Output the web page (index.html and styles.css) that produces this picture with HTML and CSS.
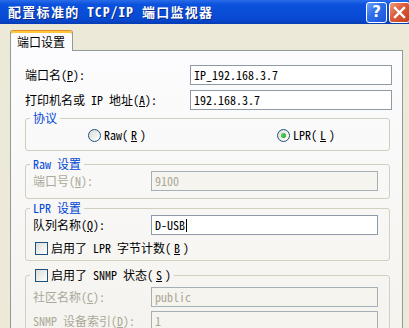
FILE: index.html
```html
<!DOCTYPE html>
<html lang="zh-CN">
<head>
    <meta charset="UTF-8">
    <meta name="viewport" content="width=device-width, initial-scale=1.0">
    <title>配置标准的 TCP/IP 端口监视器</title>
    <link rel="stylesheet" href="styles.css">
</head>
<body>
    <div class="window">
        <div class="titlebar">
            <span class="title">配置标准的 TCP/IP 端口监视器</span>
            <div class="caption-buttons">
                <span class="cap-btn help">?</span>
                <span class="cap-btn close">
                    <svg width="19" height="19" viewBox="0 0 19 19">
                        <path d="M5 5 L14 14 M14 5 L5 14" stroke="#fff" stroke-width="2.4" stroke-linecap="square"/>
                    </svg>
                </span>
            </div>
        </div>

        <div class="client">
            <div class="tab">端口设置</div>
            <div class="tab-page">
                <div class="field-row">
                    <span class="label">端口名(<u>P</u>):</span>
                    <div class="edit">IP_192.168.3.7</div>
                </div>
                <div class="field-row">
                    <span class="label">打印机名或 IP 地址(<u>A</u>):</span>
                    <div class="edit">192.168.3.7</div>
                </div>

                <fieldset class="group protocol">
                    <legend>协议</legend>
                    <div class="radios">
                        <span class="option"><span class="radio"></span>Raw(<u>R</u>)</span>
                        <span class="option"><span class="radio checked"></span>LPR(<u>L</u>)</span>
                    </div>
                </fieldset>

                <fieldset class="group raw-group">
                    <legend>Raw 设置</legend>
                    <div class="group-row disabled">
                        <span class="label">端口号(<u>N</u>):</span>
                        <div class="edit">9100</div>
                    </div>
                </fieldset>

                <fieldset class="group lpr-group">
                    <legend>LPR 设置</legend>
                    <div class="group-row">
                        <span class="label">队列名称(<u>Q</u>):</span>
                        <div class="edit focused">D-USB<span class="caret"></span></div>
                    </div>
                    <div class="check-row">
                        <span class="checkbox"></span>启用了 LPR 字节计数(<u>B</u>)
                    </div>
                </fieldset>

                <fieldset class="group snmp-group">
                    <legend><span class="checkbox"></span>启用了 SNMP 状态(<u>S</u>)</legend>
                    <div class="group-row disabled">
                        <span class="label">社区名称(<u>C</u>):</span>
                        <div class="edit">public</div>
                    </div>
                    <div class="group-row disabled">
                        <span class="label">SNMP 设备索引(<u>D</u>):</span>
                        <div class="edit">1</div>
                    </div>
                </fieldset>
            </div>
        </div>
    </div>
</body>
</html>
```

FILE: styles.css
```css
* {
    box-sizing: border-box;
    margin: 0;
    padding: 0;
}

body {
    width: 409px;
    height: 328px;
    overflow: hidden;
    background: #ece9d8;
    font-family: "Noto Sans CJK SC", sans-serif;
    font-size: 12px;
    font-feature-settings: "hwid";
    color: #000;
}

u {
    text-decoration: underline;
    text-underline-offset: 1px;
}

/* title bar */
.titlebar {
    height: 24px;
    display: flex;
    align-items: center;
    padding-left: 8px;
    background: linear-gradient(#2a6cea, #0b52dc 18%, #0849d2 80%, #063cb4);
}

.title {
    flex: 1;
    color: #fff;
    font-size: 13px;
    font-weight: bold;
    letter-spacing: 1.3px;
    line-height: 16px;
    text-shadow: 1px 1px #0a2d8c;
}

.caption-buttons {
    display: flex;
    gap: 2px;
    margin-right: -1px;
}

.cap-btn {
    width: 21px;
    height: 21px;
    border: 1px solid #fff;
    border-radius: 3px;
    display: flex;
    align-items: center;
    justify-content: center;
}

.help {
    background: linear-gradient(135deg, #6fa2f8, #2c6cea 45%, #1b55d8);
    color: #fff;
    font-family: "DejaVu Sans", sans-serif;
    font-weight: bold;
    font-size: 15px;
    line-height: 19px;
}

.close {
    background: linear-gradient(135deg, #ee9a80, #dc5a38 45%, #c4401e);
}

/* tab control */
.client {
    padding: 6px 0 0 10px;
}

.tab {
    position: relative;
    z-index: 1;
    width: 63px;
    height: 21px;
    margin-bottom: -1px;
    padding-left: 6px;
    line-height: 21px;
    background: #fcfcfe;
    border: 1px solid #919b9c;
    border-top: 1px solid #e68b2c;
    border-bottom: none;
    border-radius: 3px 3px 0 0;
    box-shadow: inset 0 2px #ffc83c;
}

.tab-page {
    width: 393px;
    height: 290px;
    padding: 14px 0 0 14px;
    background: linear-gradient(#fcfcfe, #f4f3ee);
    border: 1px solid #919b9c;
}

.field-row {
    display: flex;
    align-items: center;
    height: 20px;
    line-height: 16px;
}

.field-row + .field-row {
    margin-top: 5px;
}

.field-row .label {
    width: 165px;
}

.edit {
    height: 20px;
    padding-left: 3px;
    display: flex;
    align-items: center;
    background: #fff;
    border: 1px solid #8e9aa6;
    line-height: 16px;
}

.field-row .edit {
    width: 202px;
}

/* group boxes */
.group {
    width: 365px;
    padding: 0 0 0 7px;
    border: 1px solid #d0d0bf;
    border-radius: 3px;
}

.group legend {
    margin-left: -3px;
    padding: 0 3px;
    line-height: 14px;
    color: #0046d5;
}

.protocol {
    margin-top: 1px;
    padding-top: 3px;
    padding-bottom: 8px;
}

.raw-group {
    margin-top: 6px;
    padding-bottom: 7px;
}

.lpr-group {
    margin-top: 2px;
    padding-bottom: 5px;
}

.snmp-group {
    margin-top: 7px;
    padding-top: 5px;
    height: 70px;
}

.snmp-group legend {
    display: flex;
    align-items: center;
    gap: 3px;
    padding-left: 5px;
    color: #000;
}

.snmp-group .group-row + .group-row {
    margin-top: 4px;
}

.snmp-group .label,
.snmp-group .edit {
    line-height: 12px;
}

.radios {
    display: flex;
    padding-left: 55px;
    line-height: 14px;
}

.option {
    display: flex;
    align-items: center;
    gap: 3px;
}

.option:first-child {
    width: 189px;
}

.radio {
    width: 13px;
    height: 13px;
    border-radius: 50%;
    border: 1px solid #1c5180;
    background: linear-gradient(135deg, #dcdcd7, #fff);
    display: flex;
    align-items: center;
    justify-content: center;
}

.radio.checked::after {
    content: "";
    width: 5px;
    height: 5px;
    border-radius: 50%;
    background: radial-gradient(circle at 35% 35%, #55d055, #21a121);
}

.group-row {
    display: flex;
    align-items: center;
    height: 20px;
    line-height: 16px;
}

.group-row + .group-row {
    margin-top: 5px;
}

.group-row .label {
    width: 118px;
}

.group-row .edit {
    width: 227px;
}

.disabled {
    color: #aca899;
}

.disabled .edit {
    background: #f5f4ef;
    border-color: #a7afb6;
}

.caret {
    width: 1px;
    height: 13px;
    margin-left: 1px;
    background: #000;
}

.check-row {
    display: flex;
    align-items: center;
    gap: 3px;
    margin-top: 6px;
    padding-left: 2px;
    line-height: 14px;
}

.checkbox {
    width: 13px;
    height: 13px;
    border: 1px solid #1c5180;
    background: linear-gradient(135deg, #dcdcd7, #fff);
}
```
